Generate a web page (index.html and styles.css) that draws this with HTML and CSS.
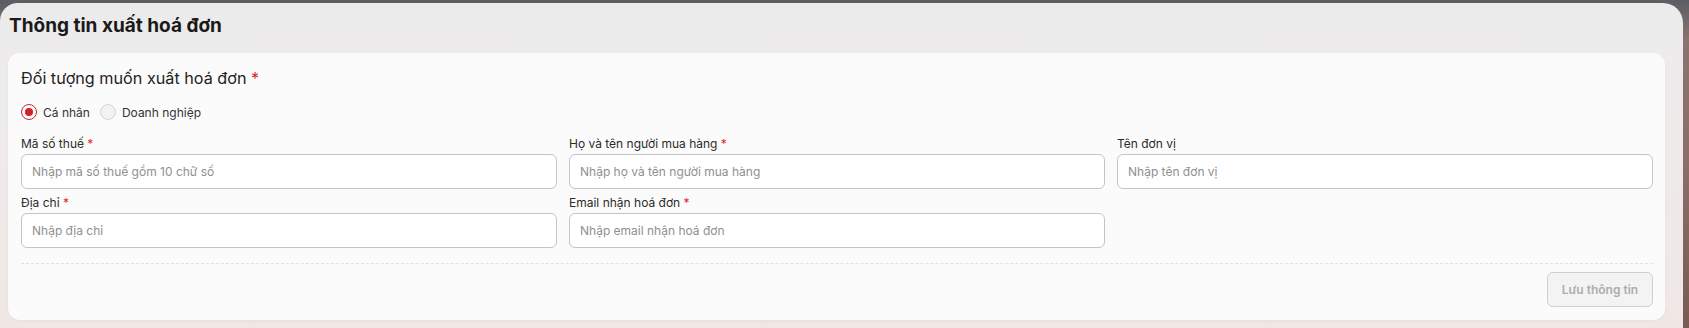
FILE: index.html
```html
<!DOCTYPE html>
<html lang="vi">
<head>
    <meta charset="UTF-8">
    <title>Thông tin xuất hoá đơn</title>
    <link rel="stylesheet" href="styles.css">
</head>
<body>
    <div class="panel">
        <h1>Thông tin xuất hoá đơn</h1>

        <div class="card">
            <h2>Đối tượng muốn xuất hoá đơn <span class="req">*</span></h2>

            <div class="radios">
                <label class="radio checked"><span class="dot"></span>Cá nhân</label>
                <label class="radio"><span class="dot"></span>Doanh nghiệp</label>
            </div>

            <div class="fields">
                <div class="field">
                    <label>Mã số thuế <span class="req">*</span></label>
                    <input type="text" placeholder="Nhập mã số thuế gồm 10 chữ số">
                </div>
                <div class="field">
                    <label>Họ và tên người mua hàng <span class="req">*</span></label>
                    <input type="text" placeholder="Nhập họ và tên người mua hàng">
                </div>
                <div class="field">
                    <label>Tên đơn vị</label>
                    <input type="text" placeholder="Nhập tên đơn vị">
                </div>
                <div class="field">
                    <label>Địa chỉ <span class="req">*</span></label>
                    <input type="text" placeholder="Nhập địa chỉ">
                </div>
                <div class="field">
                    <label>Email nhận hoá đơn <span class="req">*</span></label>
                    <input type="text" placeholder="Nhập email nhận hoá đơn">
                </div>
            </div>

            <div class="divider"></div>

            <div class="actions">
                <button class="btn" disabled>Lưu thông tin</button>
            </div>
        </div>
    </div>
</body>
</html>
```

FILE: styles.css
```css
html, body {
    height: 100%;
}
body {
    margin: 0;
    font-family: Inter, "Noto Sans", Arial, sans-serif;
    background: linear-gradient(180deg, #5b5d62 0px, #8a7470 40px, #8d6e68 160px, #7b5a54 328px);
    overflow: hidden;
}
.panel {
    margin: 3px 6px 0 0;
    height: 340px;
    border-radius: 18px 20px 0 0;
    background: linear-gradient(180deg, #ecebec 0px, #eeebeb 120px, #efe7e4 328px);
    padding: 11px 18px 0 8px;
    box-sizing: border-box;
}
h1 {
    margin: 0 0 15px 1px;
    font-size: 19px;
    line-height: 24px;
    font-weight: 700;
    color: #1a1a1a;
}
.card {
    background: #fcfbfb;
    border-radius: 12px;
    padding: 13px 12px 13px 13px;
    box-shadow: 0 1px 3px rgba(0, 0, 0, 0.04);
}
h2 {
    margin: 0;
    font-size: 16.2px;
    line-height: 24px;
    font-weight: 400;
    color: #222;
}
.req {
    color: #e0282e;
}
.radios {
    display: flex;
    gap: 10px;
    margin-top: 14px;
    height: 16px;
}
.radio {
    display: flex;
    align-items: center;
    gap: 6px;
    font-size: 12px;
    color: #333;
}
.radio .dot {
    width: 14px;
    height: 14px;
    border: 1px solid #d6d6d6;
    border-radius: 50%;
    background: #f2f2f2;
    box-sizing: content-box;
    position: relative;
}
.radio.checked .dot {
    border: 1px solid #d0222a;
    background: #fff;
}
.radio.checked .dot::after {
    content: "";
    position: absolute;
    left: 3px;
    top: 3px;
    width: 8px;
    height: 8px;
    border-radius: 50%;
    background: #d0222a;
}
.fields {
    display: grid;
    grid-template-columns: repeat(3, 1fr);
    column-gap: 12px;
    row-gap: 6px;
    margin-top: 16px;
}
.field label {
    display: block;
    font-size: 12px;
    line-height: 16px;
    color: #2b2b2b;
    margin-bottom: 2px;
}
.field input {
    display: block;
    width: 100%;
    height: 35px;
    box-sizing: border-box;
    border: 1px solid #c4c4c4;
    border-radius: 6px;
    background: #fff;
    padding: 0 10px;
    font-family: inherit;
    font-size: 12px;
    color: #333;
    outline: none;
}
.field input::placeholder {
    color: #8f8f8f;
}
.divider {
    margin-top: 15px;
    border-top: 1px dashed #e2e0e0;
}
.actions {
    display: flex;
    justify-content: flex-end;
    margin-top: 8px;
}
.btn {
    width: 106px;
    height: 35px;
    border: 1px solid #cfcfcf;
    border-radius: 6px;
    background: #f3f3f3;
    color: #adadad;
    font-family: inherit;
    font-size: 12px;
    font-weight: 600;
}
```
